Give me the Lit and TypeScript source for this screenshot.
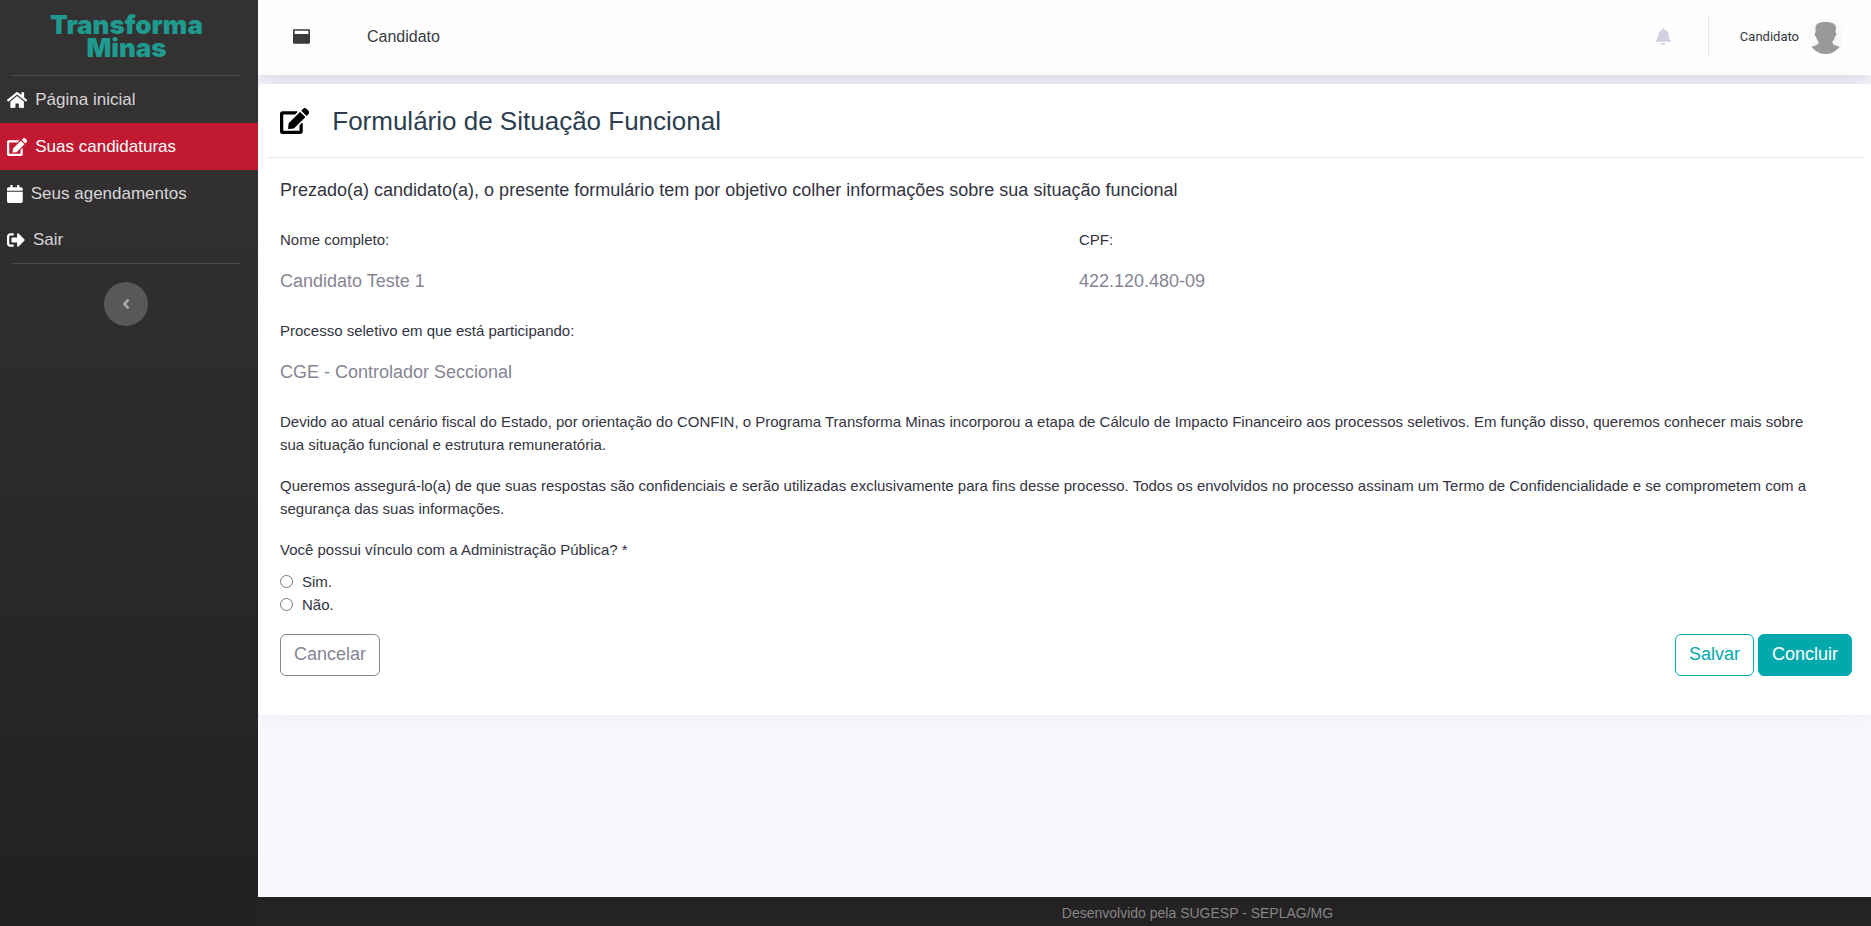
import { LitElement, html, css, svg } from "lit";
import { customElement, property } from "lit/decorators.js";

interface Glyph {
  width: number;
  path: string;
}

const glyphs: Record<string, Glyph> = {
  home: {
    width: 576,
    path: "M280.37 148.26L96 300.11V464a16 16 0 0 0 16 16l112.06-.29a16 16 0 0 0 15.92-16V368a16 16 0 0 1 16-16h64a16 16 0 0 1 16 16v95.64a16 16 0 0 0 16 16.05L464 480a16 16 0 0 0 16-16V300L295.67 148.26a12.19 12.19 0 0 0-15.3 0zM571.6 251.47L488 182.56V44.05a12 12 0 0 0-12-12h-56a12 12 0 0 0-12 12v72.61L318.47 43a48 48 0 0 0-61 0L4.34 251.47a12 12 0 0 0-1.6 16.9l25.5 31A12 12 0 0 0 45.15 301l235.22-193.74a12.19 12.19 0 0 1 15.3 0L530.9 301a12 12 0 0 0 16.9-1.6l25.5-31a12 12 0 0 0-1.7-16.93z",
  },
  edit: {
    width: 576,
    path: "M402.6 83.2l90.2 90.2c3.8 3.8 3.8 10 0 13.8L274.4 405.6l-92.8 10.3c-12.4 1.4-22.9-9.1-21.5-21.5l10.3-92.8L388.8 83.2c3.8-3.8 10-3.8 13.8 0zm162-22.9l-48.8-48.8c-15.2-15.2-39.9-15.2-55.2 0l-35.4 35.4c-3.8 3.8-3.8 10 0 13.8l90.2 90.2c3.8 3.8 10 3.8 13.8 0l35.4-35.4c15.2-15.3 15.2-40 0-55.2zM384 346.2V448H64V128h229.8c3.2 0 6.2-1.3 8.5-3.5l40-40c7.6-7.6 2.2-20.5-8.5-20.5H48C21.5 64 0 85.5 0 112v352c0 26.500 21.500 48 48 48h352c26.500 0 48-21.500 48-48V306.200c0-10.700-12.900-16-20.500-8.500l-40 40c-2.200 2.300-3.500 5.300-3.500 8.500z",
  },
  calendar: {
    width: 448,
    path: "M12 192h424c6.600 0 12 5.400 12 12v260c0 26.500-21.500 48-48 48H48c-26.500 0-48-21.500-48-48V204c0-6.600 5.400-12 12-12zm436-44v-36c0-26.500-21.500-48-48-48h-48V12c0-6.600-5.400-12-12-12h-40c-6.600 0-12 5.400-12 12v52H160V12c0-6.600-5.400-12-12-12h-40c-6.600 0-12 5.400-12 12v52H48C21.500 64 0 85.500 0 112v36c0 6.600 5.400 12 12 12h424c6.600 0 12-5.400 12-12z",
  },
  exit: {
    width: 512,
    path: "M497 273L329 441c-15 15-41 4.500-41-17v-96H152c-13.300 0-24-10.700-24-24v-96c0-13.300 10.700-24 24-24h136V88c0-21.400 25.900-32 41-17l168 168c9.300 9.400 9.300 24.600 0 34zM192 436v-40c0-6.600-5.400-12-12-12H96c-17.700 0-32-14.300-32-32V160c0-17.700 14.300-32 32-32h84c6.600 0 12-5.400 12-12V76c0-6.600-5.400-12-12-12H96c-53 0-96 43-96 96v192c0 53 43 96 96 96h84c6.600 0 12-5.400 12-12z",
  },
  bell: {
    width: 448,
    path: "M224 512c35.320 0 63.970-28.650 63.970-64H160.030c0 35.350 28.650 64 63.970 64zm215.390-149.710c-19.320-20.760-55.470-51.990-55.470-154.290 0-77.700-54.480-139.900-127.940-155.160V32c0-17.670-14.320-32-31.980-32s-31.980 14.330-31.980 32v20.840C118.560 68.100 64.080 130.300 64.080 208c0 102.300-36.150 133.530-55.470 154.290-6 6.450-8.660 14.160-8.610 21.710.11 16.400 12.980 32 32.100 32h383.800c19.120 0 32-15.600 32.100-32 .05-7.550-2.610-15.270-8.610-21.710z",
  },
  angle: {
    width: 256,
    path: "M31.700 239l136-136c9.400-9.400 24.600-9.400 33.900 0l22.600 22.600c9.400 9.400 9.400 24.600 0 33.900L127.900 256l96.400 96.400c9.400 9.400 9.400 24.600 0 33.900L201.700 409c-9.400 9.400-24.600 9.400-33.900 0l-136-136c-9.500-9.400-9.500-24.600-.1-34z",
  },
  panel: {
    width: 512,
    path: "M476 40H36C16 40 0 56 0 76v360c0 20 16 36 36 36h440c20 0 36-16 36-36V76c0-20-16-36-36-36zm-12 134c0 6-4 10-10 10H58c-6 0-10-4-10-10V96c0-6 4-10 10-10h396c6 0 10 4 10 10v78z",
  },
};

@customElement("fa-glyph")
class FaGlyph extends LitElement {
  @property() name = "home";

  static styles = css`
    :host {
      display: inline-flex;
      flex: none;
      height: 1em;
    }
    .glyph {
      display: block;
      height: 1em;
      fill: currentColor;
    }
  `;

  render() {
    const glyph = glyphs[this.name];
    return html`<svg class="glyph" viewBox="0 0 ${glyph.width} 512" aria-hidden="true">
      ${svg`<path d=${glyph.path}></path>`}
    </svg>`;
  }
}

@customElement("side-menu")
class SideMenu extends LitElement {
  static styles = css`
    :host {
      display: flex;
      flex-direction: column;
      color: #d6d6d7;
      background: linear-gradient(180deg, #333132 10%, #222021 100%);
    }
    .brand {
      height: 75px;
      box-sizing: border-box;
      padding: 13px 5px 0 0;
      text-align: center;
      font: 900 26px/23px Inter, "Open Sans", sans-serif;
      color: #1f9a8f;
      text-decoration: none;
    }
    .brand-line {
      display: block;
    }
    .rule {
      width: auto;
      height: 1px;
      margin: 0 18px 0 12px;
      border: 0;
      background: #4e4c4d;
    }
    .link {
      display: flex;
      align-items: center;
      gap: 8px;
      height: 47px;
      padding: 0 7px;
      font-size: 17px;
      color: inherit;
      text-decoration: none;
    }
    .link:last-child {
      height: 46px;
    }
    .link fa-glyph {
      font-size: 18px;
      color: #fff;
    }
    .link.active {
      color: #fff;
      background: #c01931;
    }
    .toggle {
      display: grid;
      place-items: center;
      align-self: center;
      width: 44px;
      height: 44px;
      margin: 18px 6px 0 0;
      padding: 0;
      border: 0;
      border-radius: 50%;
      font-size: 16px;
      color: #adacac;
      background: #595758;
    }
  `;

  render() {
    const links = [
      { icon: "home", label: "Página inicial", active: false },
      { icon: "edit", label: "Suas candidaturas", active: true },
      { icon: "calendar", label: "Seus agendamentos", active: false },
      { icon: "exit", label: "Sair", active: false },
    ];
    return html`
      <a class="brand" href="#">
        <span class="brand-line">Transforma</span>
        <span class="brand-line">Minas</span>
      </a>
      <hr class="rule" />
      <nav>
        ${links.map(
          (link) => html`<a class="link ${link.active ? "active" : ""}" href="#">
            <fa-glyph name=${link.icon}></fa-glyph><span>${link.label}</span>
          </a>`
        )}
      </nav>
      <hr class="rule" />
      <button class="toggle" aria-label="Recolher menu"><fa-glyph name="angle"></fa-glyph></button>
    `;
  }
}

@customElement("top-bar")
class TopBar extends LitElement {
  static styles = css`
    :host {
      display: flex;
      align-items: center;
      height: 75px;
      box-sizing: border-box;
      padding: 0 28px 2px 35px;
      background: #fefefe;
      box-shadow: 0 0 28px rgba(82, 85, 110, 0.26);
    }
    .icon-button {
      display: grid;
      place-items: center;
      padding: 0;
      border: 0;
      background: none;
      color: #3a3a3a;
      font-size: 17px;
    }
    .role {
      margin-left: 57px;
      font-size: 16px;
      color: #3a3a45;
    }
    .bell {
      margin-left: auto;
      color: #d1d1e2;
    }
    .divider {
      width: 1px;
      height: 41px;
      margin: 0 31px 0 37px;
      background: #e3e6f0;
    }
    .user {
      display: flex;
      align-items: center;
      gap: 9px;
      font: 13px/20px Roboto, sans-serif;
      color: #33343f;
      text-decoration: none;
    }
    .avatar {
      display: block;
      width: 35px;
      height: 35px;
      border-radius: 50%;
    }
  `;

  render() {
    return html`
      <button class="icon-button" aria-label="Menu"><fa-glyph name="panel"></fa-glyph></button>
      <span class="role">Candidato</span>
      <button class="icon-button bell" aria-label="Notificações"><fa-glyph name="bell"></fa-glyph></button>
      <span class="divider"></span>
      <a class="user" href="#">
        <span>Candidato</span>
        <svg class="avatar" viewBox="0 0 35 35" aria-hidden="true">
          <rect width="35" height="35" fill="#f8f8f8" />
          <path
            fill="#999"
            d="M7.500 9C7.500 5 11 3 17.500 3S28 5 28 9L27.500 13.500C29 13.500 28.500 17 27 17.500C26.500 20 25.500 21.500 24.500 22.500V24C25.500 26.500 28.500 26.500 32 28V35H3V28C6.500 26.500 9.500 26.500 10.500 24V22.500C9.500 21.500 8.500 20 8 17.500C6.500 17 6.200 13.500 7.700 13.500Z"
          />
        </svg>
      </a>
    `;
  }
}

@customElement("status-form")
class StatusForm extends LitElement {
  static styles = css`
    :host {
      display: block;
      padding: 0 6px 39px 9px;
      border-radius: 6px 0 0 6px;
      background: #fff;
      color: #33343f;
      font-size: 15px;
      line-height: 23px;
      box-shadow: 0 0 28px rgba(82, 85, 110, 0.08);
    }
    .heading {
      display: flex;
      align-items: center;
      gap: 23px;
      height: 73px;
      padding-left: 13px;
      border-bottom: 1px solid #eaeaec;
    }
    .heading fa-glyph {
      font-size: 26px;
      color: #000;
    }
    .title {
      margin: 0;
      font-size: 26px;
      line-height: 32px;
      font-weight: 400;
      color: #2c3e50;
    }
    .body {
      padding: 20px 13px 0;
    }
    .lead {
      margin: 0 0 26px;
      font-size: 18px;
      line-height: 24px;
    }
    .fields {
      display: grid;
      grid-template-columns: 1fr 1fr;
      gap: 24px 26px;
      margin: 0 0 24px;
    }
    .wide {
      grid-column: 1 / -1;
    }
    .term {
      margin-bottom: 16px;
    }
    .value {
      margin: 0;
      font-size: 18px;
      line-height: 28px;
      color: #868594;
    }
    .text {
      margin: 0 0 18px;
      padding-right: 32px;
    }
    .choices {
      margin: 0 0 18px;
      padding: 0;
      border: 0;
    }
    .question {
      margin-bottom: 9px;
      padding: 0;
    }
    .choice {
      display: flex;
      align-items: center;
      gap: 9px;
    }
    .choice input {
      width: 13px;
      height: 13px;
      margin: 0;
    }
    .actions {
      display: flex;
      gap: 4px;
    }
    .button {
      height: 42px;
      padding: 0 13px 2px;
      border: 1px solid currentColor;
      border-radius: 6px;
      font: 18px/24px "Liberation Sans", Arial, sans-serif;
      color: #01a9ac;
      background: #fff;
    }
    .cancel {
      margin-right: auto;
      color: #868594;
    }
    .submit {
      border-color: #01a9ac;
      color: #fff;
      background: #01a9ac;
    }
  `;

  render() {
    return html`
      <header class="heading">
        <fa-glyph name="edit"></fa-glyph>
        <h1 class="title">Formulário de Situação Funcional</h1>
      </header>
      <form class="body">
        <p class="lead">
          Prezado(a) candidato(a), o presente formulário tem por objetivo colher informações sobre sua situação funcional
        </p>
        <dl class="fields">
          <div>
            <dt class="term">Nome completo:</dt>
            <dd class="value">Candidato Teste 1</dd>
          </div>
          <div>
            <dt class="term">CPF:</dt>
            <dd class="value">422.120.480-09</dd>
          </div>
          <div class="wide">
            <dt class="term">Processo seletivo em que está participando:</dt>
            <dd class="value">CGE - Controlador Seccional</dd>
          </div>
        </dl>
        <p class="text">
          Devido ao atual cenário fiscal do Estado, por orientação do CONFIN, o Programa Transforma Minas incorporou a
          etapa de Cálculo de Impacto Financeiro aos processos seletivos. Em função disso, queremos conhecer mais sobre
          sua situação funcional e estrutura remuneratória.
        </p>
        <p class="text">
          Queremos assegurá-lo(a) de que suas respostas são confidenciais e serão utilizadas exclusivamente para fins
          desse processo. Todos os envolvidos no processo assinam um Termo de Confidencialidade e se comprometem com a
          segurança das suas informações.
        </p>
        <fieldset class="choices">
          <legend class="question">Você possui vínculo com a Administração Pública? *</legend>
          <label class="choice"><input type="radio" name="vinculo" value="sim" />Sim.</label>
          <label class="choice"><input type="radio" name="vinculo" value="nao" />Não.</label>
        </fieldset>
        <div class="actions">
          <button class="button cancel" type="button">Cancelar</button>
          <button class="button" type="button">Salvar</button>
          <button class="button submit" type="button">Concluir</button>
        </div>
      </form>
    `;
  }
}

@customElement("app-root")
class AppRoot extends LitElement {
  static styles = css`
    :host {
      display: grid;
      grid-template-columns: 258px minmax(0, 1fr);
      min-height: 100vh;
      font-family: "Liberation Sans", Arial, sans-serif;
      background: #f8f9fd;
    }
    .content {
      display: flex;
      flex-direction: column;
      gap: 9px;
      overflow: hidden;
    }
    .footer {
      margin-top: auto;
      padding: 6px 0 3px 266px;
      font-size: 14px;
      line-height: 20px;
      text-align: center;
      color: #868686;
      background: #242223;
    }
  `;

  render() {
    return html`
      <side-menu></side-menu>
      <div class="content">
        <top-bar></top-bar>
        <status-form></status-form>
        <footer class="footer">Desenvolvido pela SUGESP - SEPLAG/MG</footer>
      </div>
    `;
  }
}
